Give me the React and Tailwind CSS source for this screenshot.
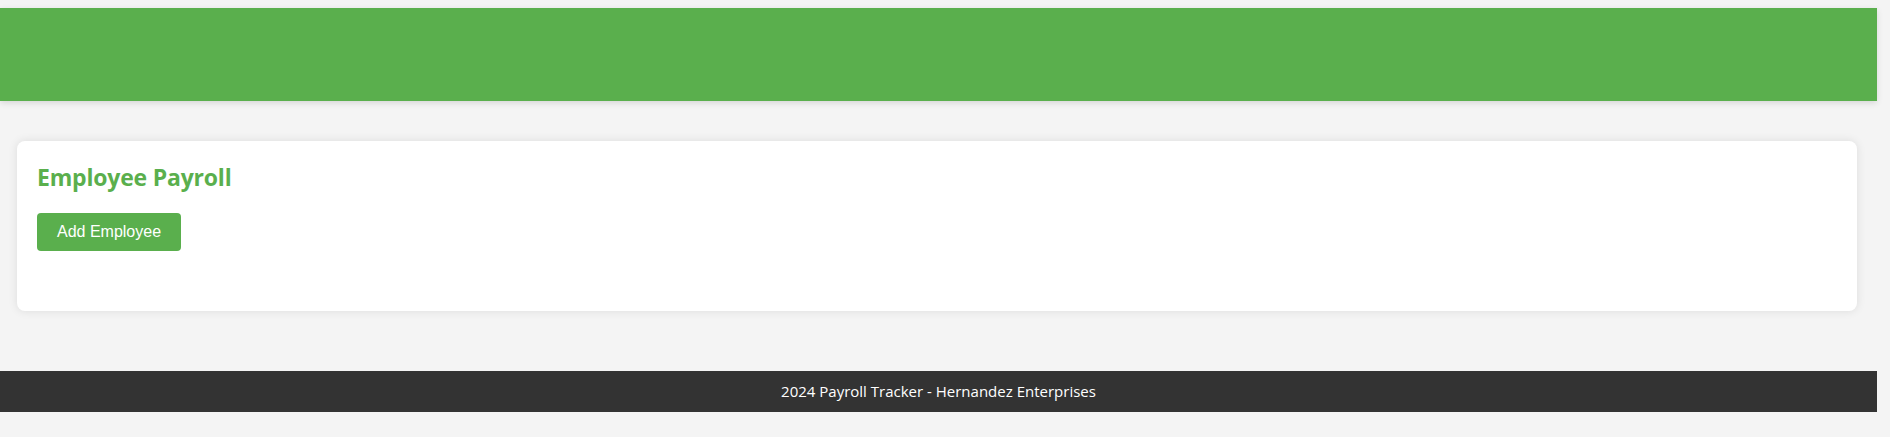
import React from 'react';

const App = () => {
    return (
        <div className="min-h-[437px] bg-[#f4f4f4] font-['Open_Sans',sans-serif]">
            <div className="w-[1877px] pt-2">
                {/* Top bar */}
                <header className="h-[93px] bg-[#5aaf4d] shadow-[0_2px_6px_rgba(0,0,0,0.12)]" />

                <main className="pt-10 pl-[17px] pr-5">
                    <div className="h-[170px] bg-white rounded-lg shadow-[0_0_10px_rgba(0,0,0,0.1)] p-5">
                        <h2 className="text-[23px] leading-8 font-bold text-[#5aaf4d] tracking-[-0.2px]">Employee Payroll</h2>
                        <button className="mt-5 h-[38px] w-[144px] rounded bg-[#5aaf4d] text-white text-base font-['Liberation_Sans',sans-serif]">
                            Add Employee
                        </button>
                    </div>
                </main>

                <footer className="mt-[60px] h-[41px] bg-[#333333] flex items-center justify-center text-white text-[15px]">
                    2024 Payroll Tracker - Hernandez Enterprises
                </footer>
            </div>
        </div>
    );
};

export default App;
